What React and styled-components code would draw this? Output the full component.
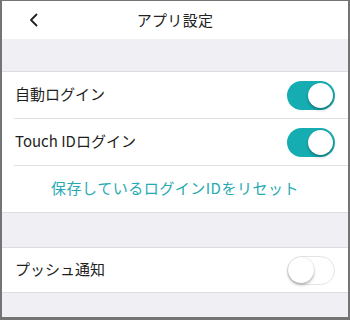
import React from "react";
import styled, { createGlobalStyle } from "styled-components";

const Global = createGlobalStyle`
  html, body { margin: 0; padding: 0; background: #efeff4; }
  body { font-family: "Noto Sans CJK JP", "Noto Sans", sans-serif; }
`;

const Frame = styled.div`
  box-sizing: border-box;
  width: 350px;
  height: 320px;
  border-style: solid;
  border-color: #747474;
  border-width: 1px 2px 3px 2px;
  background: #efeff4;
  display: flex;
  flex-direction: column;
  overflow: hidden;
`;

const Header = styled.div`
  height: 38px;
  background: #fff;
  position: relative;
  display: flex;
  align-items: center;
  justify-content: center;
  flex-shrink: 0;
`;

const Title = styled.div`
  font-size: 15px;
  line-height: 20px;
  color: #222;
  letter-spacing: 0.3px;
  margin-top: -1px;
`;

const Back = styled.button`
  position: absolute;
  left: 22px;
  top: 9px;
  width: 20px;
  height: 20px;
  padding: 0;
  border: 0;
  background: none;
  display: flex;
  align-items: center;
  justify-content: center;
`;

const Spacer = styled.div`
  height: ${(p) => p.h}px;
  flex-shrink: 0;
`;

const Group = styled.div`
  background: #fff;
  border-top: 1px solid #dcdce0;
  border-bottom: 1px solid #dcdce0;
  flex-shrink: 0;
`;

const Row = styled.div`
  height: ${(p) => p.$h || 46}px;
  display: flex;
  align-items: center;
  justify-content: space-between;
  padding: 0 13px 0 13px;
  & + & { border-top: 1px solid #e2e2e6; margin-left: 12px; padding-left: 1px; }
`;

const Label = styled.span`
  font-size: 15px;
  line-height: 20px;
  margin-top: -2px;
  color: #1e1e1e;
`;

const LinkRow = styled.div`
  height: 46px;
  display: flex;
  align-items: center;
  justify-content: center;
  border-top: 1px solid #e2e2e6;
  margin-left: 12px;
  padding-right: 12px;
`;

const LinkText = styled.span`
  font-size: 15px;
  line-height: 20px;
  margin-top: -2px;
  color: #26a9b1;
  letter-spacing: 0.5px;
`;

const Switch = styled.div`
  box-sizing: border-box;
  width: 48px;
  height: 29px;
  border-radius: 15px;
  background: ${(p) => (p.on ? "#16adb2" : "#fff")};
  border: ${(p) => (p.on ? "none" : "1.5px solid #e4e4e6")};
  position: relative;
  flex-shrink: 0;
`;

const Knob = styled.div`
  position: absolute;
  top: ${(p) => (p.on ? 2 : 0)}px;
  ${(p) => (p.on ? "right: 2px;" : "left: 0;")}
  width: ${(p) => (p.on ? 25 : 26)}px;
  height: ${(p) => (p.on ? 25 : 26)}px;
  border-radius: 50%;
  background: #fff;
  box-shadow: 0 2px 3px rgba(0, 0, 0, 0.28), 0 0 1px rgba(0, 0, 0, 0.2);
`;

const Toggle = ({ on }) => (
  <Switch on={on}>
    <Knob on={on} />
  </Switch>
);

export default function App() {
  return (
    <>
      <Global />
      <Frame>
        <Header>
          <Back aria-label="back">
            <svg width="12" height="14" viewBox="0 0 12 14">
              <path d="M8.5 1.5 L3 7 L8.5 12.5" fill="none" stroke="#222" strokeWidth="1.8" strokeLinecap="round" strokeLinejoin="round" />
            </svg>
          </Back>
          <Title>アプリ設定</Title>
        </Header>
        <Spacer h={32} />
        <Group>
          <Row>
            <Label>自動ログイン</Label>
            <Toggle on />
          </Row>
          <Row>
            <Label>Touch IDログイン</Label>
            <Toggle on />
          </Row>
          <LinkRow>
            <LinkText>保存しているログインIDをリセット</LinkText>
          </LinkRow>
        </Group>
        <Spacer h={34} />
        <Group>
          <Row $h={44}>
            <Label>プッシュ通知</Label>
            <Toggle />
          </Row>
        </Group>
      </Frame>
    </>
  );
}
